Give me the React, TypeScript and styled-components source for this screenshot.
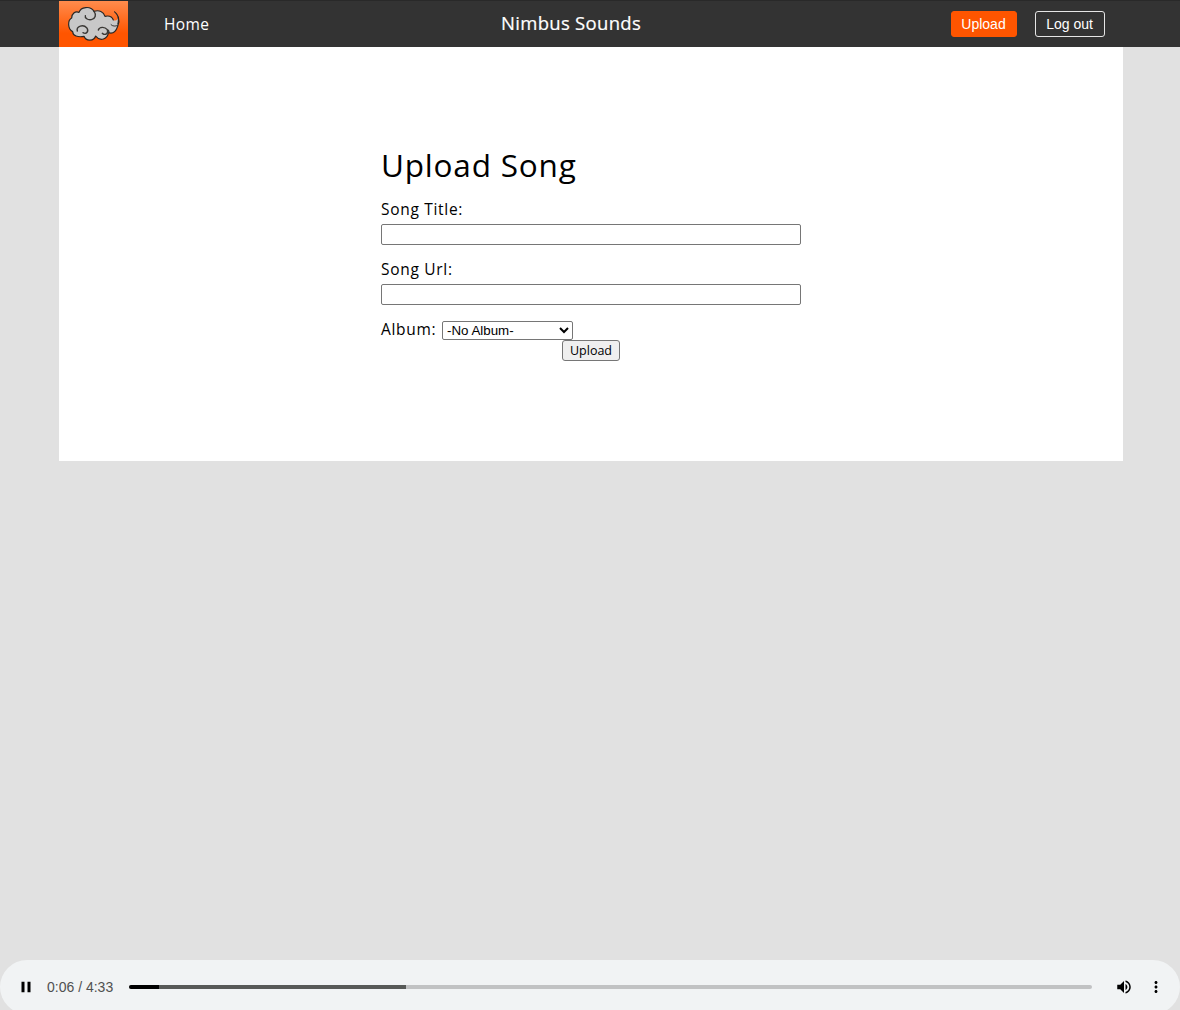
import React from "react";
import styled, { createGlobalStyle } from "styled-components";

const GlobalStyle = createGlobalStyle`
  * { box-sizing: border-box; }
  body { margin: 0; background: #e1e1e1; }
`;

const Page = styled.div`
  display: flex;
  flex-direction: column;
  height: 1010px;
  overflow: hidden;
  background: #e1e1e1;
  color: #000;
  font: 16px/20px "Open Sans", sans-serif;
`;

const Header = styled.header`
  flex: none;
  display: flex;
  height: 47px;
  padding: 0 75px 0 59px;
  background: #333;
  border-top: 1px solid #292929;
  color: #fff;
`;

const Logo = styled.a`
  display: block;
  width: 69px;
  height: 46px;
  background: linear-gradient(#ff8c4d, #ff5500 70%);
  svg { display: block; }
`;

const HomeLink = styled.a`
  margin-left: 36px;
  width: 337px;
  padding-top: 13px;
  font-size: 15.5px;
  letter-spacing: 0.4px;
`;

const Brand = styled.div`
  width: 450px;
  padding-top: 12px;
  font-size: 18.5px;
  letter-spacing: 0.3px;
  -webkit-text-stroke: 0.2px #fff;
`;

const HeaderActions = styled.div`
  display: flex;
  gap: 18px;
  padding-top: 10px;
`;

const HeaderButton = styled.button<{ $primary?: boolean }>`
  width: ${(p) => (p.$primary ? 66 : 70)}px;
  height: 26px;
  padding: 0 1px 0 0;
  border: 1px solid ${(p) => (p.$primary ? "#f50" : "#e5e5e5")};
  border-radius: 3px;
  background: ${(p) => (p.$primary ? "#f50" : "transparent")};
  color: #fff;
  font: 14px "Liberation Sans", Arial, sans-serif;
`;

const Main = styled.main`
  flex: none;
  width: 1064px;
  height: 414px;
  margin-left: 59px;
  padding: 98px 322px 0;
  background: #fff;
`;

const Title = styled.h1`
  margin: 0 0 14px;
  font-size: 31.5px;
  line-height: 40px;
  font-weight: 400;
  letter-spacing: 0.8px;
  white-space: nowrap;
`;

const Form = styled.form`
  display: flex;
  flex-direction: column;
`;

const Label = styled.label`
  font-size: 15.5px;
  line-height: 20px;
  letter-spacing: 0.7px;
  white-space: nowrap;
`;

const TextInput = styled.input`
  width: 420px;
  height: 21px;
  margin: 5px 0 14px;
  padding: 1px 2px;
  border: 1px solid #767676;
  border-radius: 2px;
  background: #fff;
`;

const AlbumRow = styled.div`
  display: flex;
  height: 21px;
`;

const AlbumLabel = styled(Label)`
  width: 61px;
`;

const Select = styled.select`
  width: 131px;
  height: 19px;
  margin-top: 2px;
  padding: 0;
  border: 1px solid #767676;
  border-radius: 2px;
  background: #fff;
  color: #000;
  font: 13.333px "Liberation Sans", Arial, sans-serif;
`;

const SubmitButton = styled.button`
  align-self: center;
  width: 58px;
  height: 21px;
  padding: 0;
  border: 1px solid #767676;
  border-radius: 3px;
  background: #efefef;
  color: #000;
  font: 12.5px "Open Sans", sans-serif;
  line-height: 18px;
`;

const Player = styled.div`
  flex: none;
  display: flex;
  align-items: center;
  height: 54px;
  margin-top: auto;
  margin-bottom: -4px;
  padding: 0 15px 0 17px;
  border-radius: 27px;
  background: #f1f3f4;
`;

const Time = styled.span`
  width: 82px;
  margin-left: 12px;
  color: #505050;
  font: 14px "Liberation Sans", Arial, sans-serif;
`;

const Track = styled.div`
  display: flex;
  width: 963px;
  height: 4px;
  margin-right: 23px;
  border-radius: 2px;
  overflow: hidden;
  background: #c1c2c3;
`;

const Segment = styled.div<{ $width: number; $color: string }>`
  width: ${(p) => p.$width}px;
  background: ${(p) => p.$color};
`;

const MenuIcon = styled.svg`
  margin-left: 14px;
`;

const CloudLogo = () => (
  <svg width="69" height="46" viewBox="0 0 207 138" fill="none" strokeLinecap="round" strokeLinejoin="round">
    <path
      d="M60 34C65 18 94 13 105 31C120 26 134 32 138 46C151 43 160 49 163 57C170 61 178 57 177 47C181 60 179 72 176 76C170 94 160 99 148 95C146 114 124 123 110 105C105 121 81 122 75 106C57 110 41 104 41 92C26 85 25 58 38 51C38 38 48 30 60 34Z"
      fill="#c8c8c8"
    />
    <path
      d="M163 57C160 49 151 43 138 46C134 32 120 26 105 31C94 13 65 18 60 34C48 30 38 38 38 51C25 58 26 85 41 92C41 104 57 110 75 106C81 122 105 121 110 105C124 123 146 114 148 95C160 99 170 94 176 76C180 67 181 58 178 48"
      stroke="#292725"
      strokeWidth="3.6"
    />
    <g stroke="#3a3835" strokeWidth="4.2">
      <path d="M105 31C113 41 109 54 97 56C86 58 77 51 79 44" />
      <path d="M55 90C51 75 73 69 83 80C91 91 82 101 72 95" />
      <path d="M118 87C121 77 137 76 145 86C149 98 139 104 130 97" />
      <path d="M148 95C150 94 150 91 148 88" />
      <path d="M176 73C170 77 160 76 156 71" strokeWidth="3" />
    </g>
    <path d="M165 30C178 37 184 54 178 70L175 69C179 53 176 42 165 33Z" fill="#292725" />
  </svg>
);

export default function App() {
  return (
    <Page>
      <GlobalStyle />
      <Header>
        <Logo><CloudLogo /></Logo>
        <HomeLink>Home</HomeLink>
        <Brand>Nimbus Sounds</Brand>
        <HeaderActions>
          <HeaderButton $primary>Upload</HeaderButton>
          <HeaderButton>Log out</HeaderButton>
        </HeaderActions>
      </Header>
      <Main>
        <Title>Upload Song</Title>
        <Form onSubmit={(e) => e.preventDefault()}>
          <Label htmlFor="title">Song Title:</Label>
          <TextInput id="title" />
          <Label htmlFor="url">Song Url:</Label>
          <TextInput id="url" />
          <AlbumRow>
            <AlbumLabel htmlFor="album">Album:</AlbumLabel>
            <Select id="album"><option>-No Album-</option></Select>
          </AlbumRow>
          <SubmitButton>Upload</SubmitButton>
        </Form>
      </Main>
      <Player>
        <svg width="18" height="18" viewBox="0 0 24 24"><path d="M6 19h4V5H6v14zm8-14v14h4V5h-4z" /></svg>
        <Time>0:06 / 4:33</Time>
        <Track>
          <Segment $width={30} $color="#000" />
          <Segment $width={247} $color="#575957" />
        </Track>
        <svg width="18" height="18" viewBox="0 0 24 24">
          <path d="M3 9v6h4l5 5V4L7 9H3zm13.5 3c0-1.77-1.02-3.29-2.5-4.03v8.05c1.48-.73 2.5-2.25 2.5-4.02zM14 3.23v2.06c2.89.86 5 3.54 5 6.71s-2.11 5.85-5 6.71v2.06c4.01-.91 7-4.49 7-8.77s-2.99-7.86-7-8.77z" />
        </svg>
        <MenuIcon width="18" height="18" viewBox="0 0 24 24">
          <path d="M12 8c1.1 0 2-.9 2-2s-.9-2-2-2-2 .9-2 2 .9 2 2 2zm0 2c-1.1 0-2 .9-2 2s.9 2 2 2 2-.9 2-2-.9-2-2-2zm0 6c-1.1 0-2 .9-2 2s.9 2 2 2 2-.9 2-2-.9-2-2-2z" />
        </MenuIcon>
      </Player>
    </Page>
  );
}
